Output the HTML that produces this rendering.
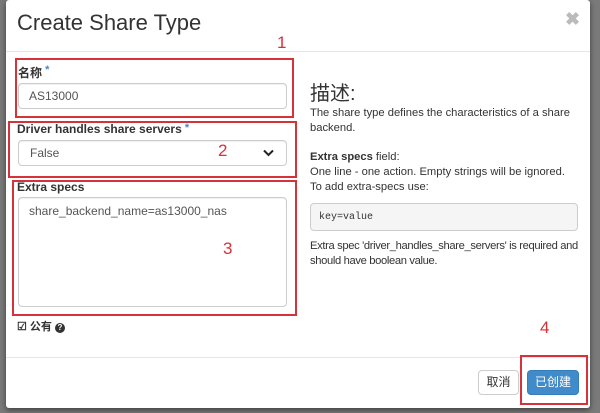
<!DOCTYPE html>
<html><head><meta charset="utf-8"><style>
body{margin:0;width:600px;height:413px;background:#7a7a7a;position:relative;overflow:hidden;font-family:"Liberation Sans","Noto Sans CJK SC",sans-serif;color:#333}
.a{position:absolute}
.modal{left:6px;top:0;width:584px;height:408px;background:#fff;border-radius:3px;box-shadow:0 2px 6px rgba(0,0,0,.5)}
.inp{position:absolute;border:1px solid #ccc;border-radius:4px;background:#fff;font-size:12px;color:#555;box-shadow:inset 0 1px 1px rgba(0,0,0,.06)}
.red{position:absolute;border:2px solid #d6323a;box-sizing:border-box}
.num{position:absolute;color:#d6323a;font-size:17px}
.t{position:absolute;font-size:11.2px;line-height:15px;white-space:nowrap}
</style></head><body>
<div class="a modal"></div>
<div class="a" style="left:17px;top:10px;font-size:22px;color:#333">Create Share Type</div>
<div class="a" style="left:565px;top:9px;font-size:18px;color:#bbb;font-weight:bold">✖</div>
<div class="a" style="left:6px;top:51px;width:584px;height:1px;background:#e5e5e5"></div>
<div class="a" style="left:6px;top:357px;width:584px;height:1px;background:#e5e5e5"></div>

<div class="a" style="left:18px;top:64px;font-size:12px;font-weight:bold">名称<span style="color:#428bca;vertical-align:top;font-size:11px"> *</span></div>
<div class="inp" style="left:18px;top:83px;width:267px;height:24px"><span style="position:absolute;left:10px;top:5px">AS13000</span></div>
<div class="a" style="left:17px;top:122px;font-size:12px;font-weight:bold">Driver handles share servers<span style="color:#428bca;vertical-align:top;font-size:11px"> *</span></div>
<div class="inp" style="left:18px;top:140px;width:267px;height:24px"><span style="position:absolute;left:11px;top:5px">False</span>
<svg style="position:absolute;right:12px;top:8px" width="11" height="8" viewBox="0 0 11 8"><path d="M1 1.5 L5.5 6 L10 1.5" stroke="#222" stroke-width="2" fill="none"/></svg></div>
<div class="a" style="left:17px;top:180px;font-size:12px;font-weight:bold">Extra specs</div>
<div class="inp" style="left:18px;top:197px;width:267px;height:108px"><span style="position:absolute;left:10px;top:6px">share_backend_name=as13000_nas</span></div>
<div class="a" style="left:17px;top:318px;font-size:11px;font-weight:bold">☑ 公有 <span style="display:inline-block;width:10px;height:10px;border-radius:50%;background:#333;color:#fff;font-size:8px;text-align:center;line-height:10px">?</span></div>

<div class="a" style="left:310px;top:77px;font-size:20px">描述:</div>
<div class="t" style="left:310px;top:106px">The share type defines the characteristics of a share<br>backend.</div>
<div class="t" style="left:310px;top:150px"><b>Extra specs</b> field:<br>One line - one action. Empty strings will be ignored.<br>To add extra-specs use:</div>
<div class="a" style="left:310px;top:203px;width:268px;height:28px;background:#f5f5f5;border:1px solid #ccc;border-radius:4px;box-sizing:border-box;font-family:'Liberation Mono',monospace;font-size:10px;line-height:27px;padding-left:8px">key=value</div>
<div class="t" style="left:310px;top:239px;letter-spacing:-0.35px">Extra spec 'driver_handles_share_servers' is required and<br>should have boolean value.</div>

<div class="a" style="left:478px;top:370px;width:41px;height:25px;border:1px solid #ccc;border-radius:4px;box-sizing:border-box;font-size:12px;text-align:center;line-height:23px">取消</div>
<div class="a" style="left:527px;top:370px;width:52px;height:25px;background:#428bca;border:1px solid #357ebd;border-radius:4px;box-sizing:border-box;font-size:12px;color:#fff;text-align:center;line-height:23px">已创建</div>

<div class="red" style="left:15px;top:58px;width:279px;height:60px"></div>
<div class="red" style="left:8px;top:121px;width:289px;height:57px"></div>
<div class="red" style="left:12px;top:180px;width:285px;height:136px"></div>
<div class="red" style="left:520px;top:355px;width:68px;height:50px"></div>
<div class="num" style="left:277px;top:33px">1</div>
<div class="num" style="left:218px;top:141px">2</div>
<div class="num" style="left:223px;top:239px">3</div>
<div class="num" style="left:540px;top:318px">4</div>
</body></html>
